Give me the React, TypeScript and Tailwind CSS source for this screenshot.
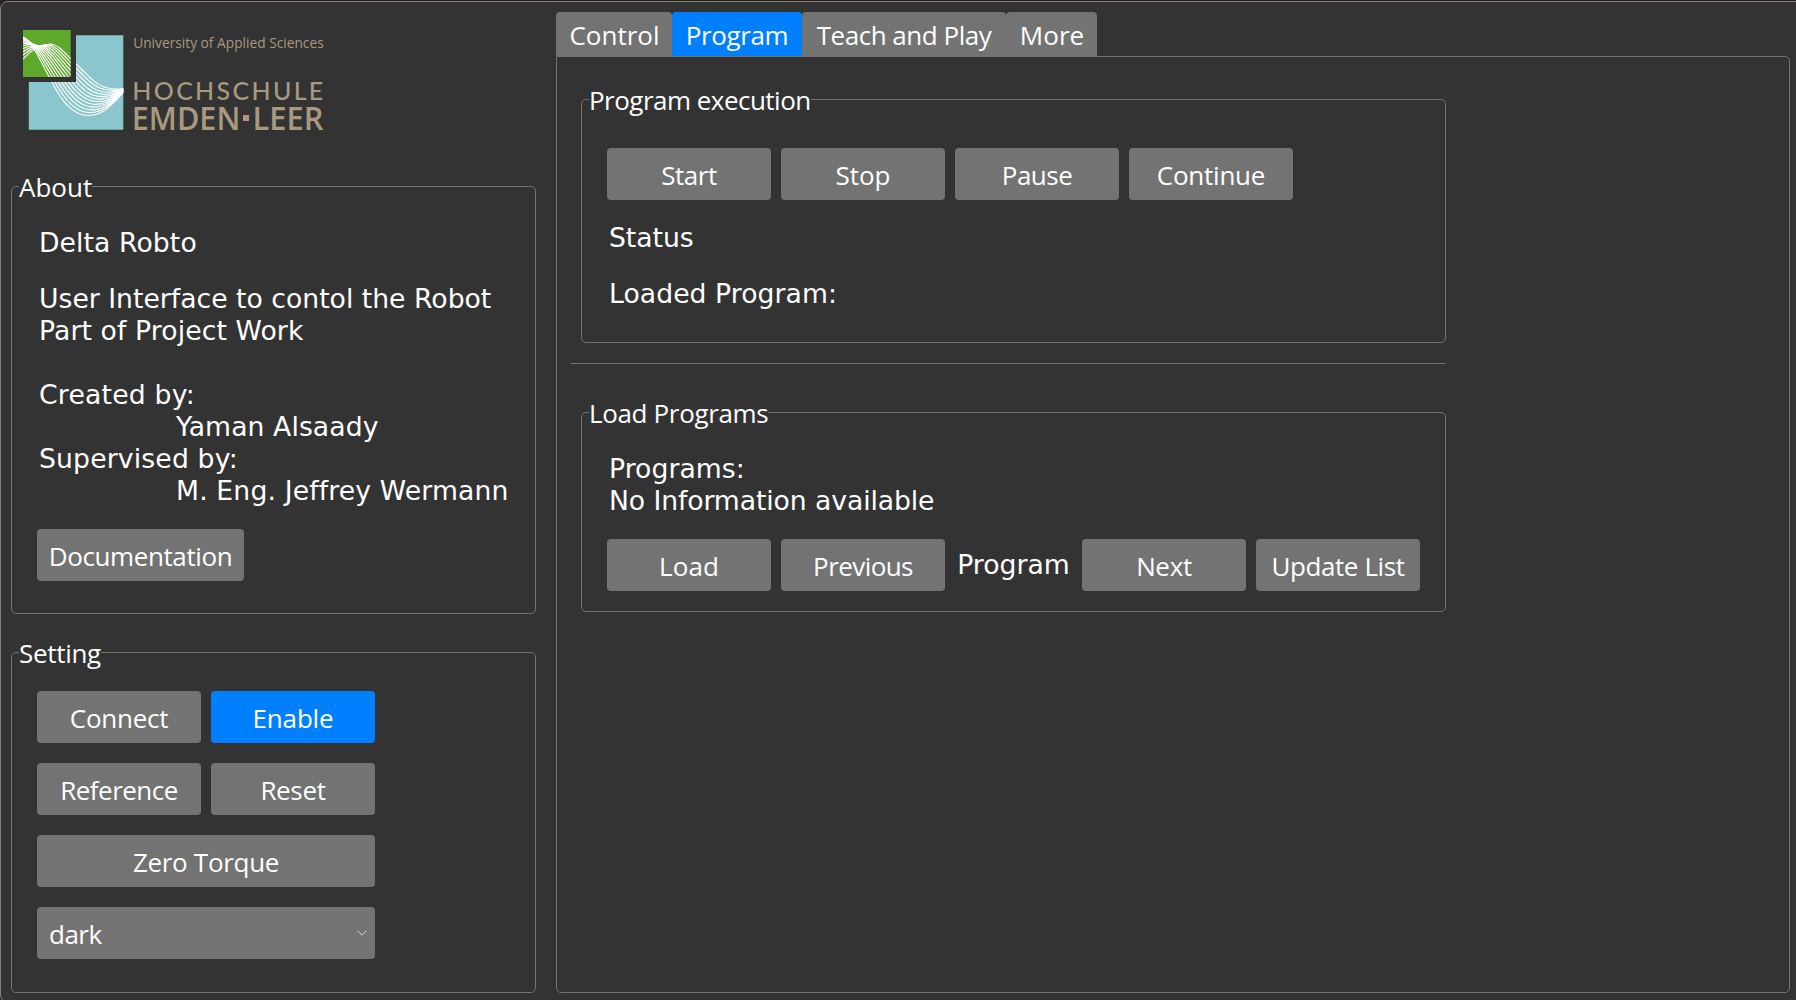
import type { ReactNode } from "react";

const lerp = (a: number, b: number, t: number) => a + (b - a) * t;

// Outermost curves of the line bundle; the others are interpolated between them.
const UPPER = [23, 59, 33, 48, 42, 44, 51, 44, 60, 45, 68, 57, 76, 64, 84, 71, 90, 79, 98, 84, 106, 89, 114, 90, 124, 88.5];
const LOWER = [23, 37, 30, 40, 33, 48, 37, 54, 43, 65, 47, 73, 52.5, 83, 60, 98, 72, 115.5, 88, 115.5, 104, 115.5, 112, 104, 124, 92];

const LINES = Array.from({ length: 12 }, (_, i) => {
  const t = i / 11;
  // The left ends bunch up towards the top of the green square.
  const eased = 1 - (1 - t) * (1 - t);
  const p = UPPER.map((v, k) => lerp(v, LOWER[k], k < 4 ? eased : t).toFixed(2));
  return `M${p[0]} ${p[1]}C${p.slice(2).join(" ")}`;
});

function Logo() {
  return (
    <svg width="320" height="116" viewBox="11 22 320 116" className="block overflow-visible">
      <defs>
        <clipPath id="squares">
          <path d="M23 30h47.7v47H23zM76 35.3h47.3v94.4H28.8V82H76z" />
        </clipPath>
      </defs>
      <path d="M23 30h47.7v47H23z" fill="#5ea92c" />
      <path d="M76 35.3h47.3v94.4H28.8V82H76z" fill="#8bc5cd" />
      <g clipPath="url(#squares)" fill="none" stroke="#fff" strokeWidth="1.15">
        {LINES.map((d) => (
          <path key={d} d={d} />
        ))}
      </g>
      <g fill="#a8997f" fontFamily="'Open Sans', sans-serif">
        <text x="133.2" y="47.6" fontSize="15.3" fontWeight="500" textLength="190.5" lengthAdjust="spacingAndGlyphs">
          University of Applied Sciences
        </text>
        <text x="132.3" y="100.2" fontSize="25" fontWeight="500" textLength="191" fontFamily="Lato, sans-serif">
          HOCHSCHULE
        </text>
        <text x="131.8" y="129.5" fontSize="32.8" fontWeight="600" textLength="108.5" lengthAdjust="spacingAndGlyphs">
          EMDEN
        </text>
        <path d="M243 115h6v6h-6z" />
        <text x="252.5" y="129.5" fontSize="32.8" fontWeight="600" textLength="71" lengthAdjust="spacingAndGlyphs">
          LEER
        </text>
      </g>
    </svg>
  );
}

function Group({ title, tracking, className, children }: { title: string; tracking: string; className: string; children: ReactNode }) {
  return (
    <section className={`flex flex-col items-start rounded-[5px] border border-[#737373] ${className}`}>
      <h2 className={`-mt-[18px] ml-[7px] h-9 bg-[#333333] leading-9 whitespace-nowrap ${tracking}`}>{title}</h2>
      {children}
    </section>
  );
}

function Button({ label, tracking = "", size = "w-[164px]", active = false }: { label: string; tracking?: string; size?: string; active?: boolean }) {
  return (
    <button
      className={`flex h-13 shrink-0 items-center justify-center rounded pt-0.5 whitespace-nowrap ${size} ${tracking} ${active ? "bg-[#0080ff]" : "bg-[#737373]"}`}
    >
      {label}
    </button>
  );
}

function Label({ className = "", children }: { className?: string; children: ReactNode }) {
  return (
    <p className={`h-8 font-['DejaVu_Sans',sans-serif] text-[26.67px] leading-8 whitespace-nowrap [font-variant-ligatures:none] ${className}`}>
      {children}
    </p>
  );
}

const TABS = [
  { label: "Control", style: "w-[116px] bg-[#737373] pl-px" },
  { label: "Program", style: "w-[130px] bg-[#0080ff] tracking-[-0.38px]" },
  { label: "Teach and Play", style: "w-[204px] bg-[#737373] tracking-[-0.48px]" },
  { label: "More", style: "w-[91px] bg-[#737373] pl-px" },
];

export default function App() {
  return (
    <div className="h-[1000px] w-[1796px] overflow-hidden bg-[#232126] pt-px font-['Open_Sans',sans-serif] text-[26px] text-white">
      <div className="flex h-[1002px] w-[1810px] gap-5 rounded-lg border border-[#8a7e72] bg-[#333333] pl-2.5">
        <aside className="w-[525px] shrink-0 pt-5">
          <Logo />
          <Group title="About" tracking="" className="mt-12 h-[428px]">
            <Label className="mt-[22px] ml-[27px] tracking-[0.08px]">Delta Robto</Label>
            <div className="mt-6 ml-[27px]">
              <Label>User Interface to contol the Robot</Label>
              <Label className="tracking-[0.1px]">Part of Project Work</Label>
              <Label className="mt-8 tracking-[0.2px]">Created by:</Label>
              <Label className="pl-[137px] tracking-[0.08px]">Yaman Alsaady</Label>
              <Label className="tracking-[0.15px]">Supervised by:</Label>
              <Label className="pl-[137px] tracking-[0.14px]">M. Eng. Jeffrey Wermann</Label>
            </div>
            <div className="mt-[22px] ml-[25px]">
              <Button label="Documentation" tracking="tracking-[-0.39px]" size="w-[207px]" />
            </div>
          </Group>
          <Group title="Setting" tracking="tracking-[-0.3px]" className="mt-[38px] h-[341px]">
            <div className="mt-5 ml-[25px] grid grid-cols-[164px_164px] gap-x-2.5 gap-y-5">
              <Button label="Connect" tracking="tracking-[-0.28px]" />
              <Button label="Enable" tracking="tracking-[-0.18px]" active />
              <Button label="Reference" tracking="tracking-[-0.53px]" />
              <Button label="Reset" tracking="tracking-[-0.35px]" />
              <Button label="Zero Torque" tracking="tracking-[-0.3px]" size="col-span-2" />
              <div className="col-span-2 flex h-13 items-center justify-between rounded bg-[#737373] pr-2 pl-3">
                <span className="pt-0.5 tracking-[-0.5px]">dark</span>
                <svg width="10" height="6" viewBox="0 0 10 6" fill="none" stroke="#d0d0d0" strokeWidth="1">
                  <path d="M.4.5 5 5.1 9.6.5" />
                </svg>
              </div>
            </div>
          </Group>
        </aside>

        <main className="w-[1234px] shrink-0 pt-2.5">
          <nav className="flex h-11">
            {TABS.map((tab) => (
              <button key={tab.label} className={`flex items-center justify-center rounded-t pt-0.5 whitespace-nowrap ${tab.style}`}>
                {tab.label}
              </button>
            ))}
          </nav>
          <div className="h-[937px] rounded-[5px] rounded-tl-none border border-[#737373] pt-[42px] pl-3.5">
            <div className="w-[875px]">
              <Group title="Program execution" tracking="tracking-[-0.52px]" className="ml-2.5 h-[244px]">
                <div className="mt-[30px] ml-[25px] flex gap-2.5">
                  <Button label="Start" tracking="tracking-[-0.45px]" />
                  <Button label="Stop" />
                  <Button label="Pause" tracking="tracking-[-0.5px]" />
                  <Button label="Continue" tracking="tracking-[-0.25px]" />
                </div>
                <Label className="mt-[22px] ml-[27px] tracking-[-0.05px]">Status</Label>
                <Label className="mt-6 ml-[27px] tracking-[0.05px]">Loaded Program:</Label>
              </Group>
              <div className="mt-5 h-px bg-[#737373]" />
              <Group title="Load Programs" tracking="tracking-[-0.35px]" className="mt-12 ml-2.5 h-[200px]">
                <Label className="mt-[22px] ml-[27px] tracking-[0.05px]">Programs:</Label>
                <Label className="ml-[27px] tracking-[-0.1px]">No Information available</Label>
                <div className="mt-[22px] ml-[25px] flex gap-2.5">
                  <Button label="Load" tracking="tracking-[0.1px]" />
                  <Button label="Previous" tracking="tracking-[-0.58px]" />
                  <Label className="w-[117px] pt-2.5 text-center">Program</Label>
                  <Button label="Next" tracking="tracking-[-0.33px]" />
                  <Button label="Update List" tracking="tracking-[-0.4px]" />
                </div>
              </Group>
            </div>
          </div>
        </main>
      </div>
    </div>
  );
}
